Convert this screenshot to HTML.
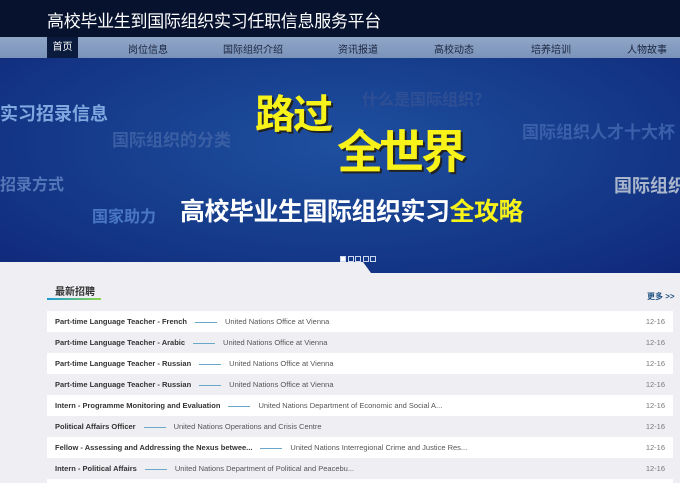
<!DOCTYPE html>
<html><head><meta charset="utf-8"><style>
*{margin:0;padding:0;box-sizing:border-box}
html,body{width:680px;height:483px;overflow:hidden}
body{background:#efeff3;font-family:"Liberation Sans","Noto Sans CJK SC",sans-serif;position:relative}
.top{position:absolute;left:0;top:0;width:680px;height:37px;background:#06122e}
.top h1{position:absolute;left:47px;top:7px;font-size:17px;font-weight:normal;color:#fff;letter-spacing:-0.3px}
.nav{position:absolute;left:0;top:37px;width:680px;height:21px;background:linear-gradient(#8fa6c8,#7b93b9)}
.nav span{position:absolute;top:4px;font-size:10px;color:#1a2540}
.nav .on{left:47px;top:0;width:31px;height:21px;background:#0a1b3d;color:#fff;text-align:center;line-height:21px}
.ban{position:absolute;left:0;top:58px;width:680px;height:215px;background:radial-gradient(ellipse at 50% 40%,#1f4fa0 0%,#173f8e 45%,#10287a 100%);overflow:hidden}
.ban b{position:absolute;white-space:nowrap;font-weight:bold}
.y{color:#f6f21a;text-shadow:2px 2px 0 #222}
.tab{position:absolute;left:0;top:262px;width:362px;height:11px;background:#efeff3}
.tab2{position:absolute;left:355px;top:262px;width:16px;height:11px;background:#efeff3;clip-path:polygon(0 0,50% 0,100% 100%,0 100%)}
.dots{position:absolute;left:340px;top:249px}
.dots i{display:inline-block;width:6px;height:6px;border:1px solid #cdd7ee;margin-right:1.5px}
.dots i:first-child{background:#fff}
.ttl{position:absolute;left:55px;top:283px;font-size:10px;font-weight:bold;color:#333}
.ul{position:absolute;left:47px;top:298px;width:54px;height:2px;background:linear-gradient(90deg,#1a9ad8,#8dd44a)}
.more{position:absolute;left:647px;top:291px;font-size:8px;color:#1d4f80;font-weight:bold}
.row{position:absolute;left:47px;width:626px;height:21px;font-size:7.5px;line-height:21px;color:#555}
.row.w{background:#fff}
.row .t{position:absolute;left:8px;font-weight:bold;color:#333}
.row .d{position:absolute;right:8px;color:#777}
.ln{display:inline-block;width:22px;height:1px;background:#6aa7c9;vertical-align:middle;margin:0 8px 0 8px}
</style></head><body>
<div class="top"><h1>高校毕业生到国际组织实习任职信息服务平台</h1></div>
<div class="nav">
<span class="on">首页</span>
<span style="left:128px">岗位信息</span>
<span style="left:223px">国际组织介绍</span>
<span style="left:338px">资讯报道</span>
<span style="left:434px">高校动态</span>
<span style="left:531px">培养培训</span>
<span style="left:627px">人物故事</span>
</div>
<div class="ban">
<b style="left:0;top:42px;font-size:18px;color:#7fa8e0">实习招录信息</b>
<b style="left:112px;top:68px;font-size:17px;color:#3a5ea3">国际组织的分类</b>
<b style="left:0;top:113px;font-size:16px;color:#5576b8">招录方式</b>
<b style="left:92px;top:145px;font-size:16px;color:#4a77c4">国家助力</b>
<b style="left:362px;top:28px;font-size:16px;color:#2f4f95">什么是国际组织？</b>
<b style="left:522px;top:60px;font-size:17px;color:#3a60aa">国际组织人才十大杯</b>
<b style="left:614px;top:114px;font-size:18px;color:#a9b6cc">国际组织</b>
<b class="y" style="left:255px;top:24px;font-size:40px;letter-spacing:-2px">路过</b>
<b class="y" style="left:337px;top:58px;font-size:46px;letter-spacing:-4px">全世界</b>
<b style="left:180px;top:134px;font-size:25px;color:#fff;letter-spacing:-0.5px">高校毕业生国际组织实习<span style="color:#f6f21a">全攻略</span></b>
</div>
<div class="tab"></div><div class="tab2"></div>
<div class="dots"><i></i><i></i><i></i><i></i><i></i></div>
<div class="ttl">最新招聘</div><div class="ul"></div>
<div class="more">更多 &gt;&gt;</div>
<div class="row w" style="top:311px"><span class="t">Part-time Language Teacher - French<span class="ln"></span><span style="font-weight:normal;color:#555">United Nations Office at Vienna</span></span><span class="d">12-16</span></div>
<div class="row" style="top:332px"><span class="t">Part-time Language Teacher - Arabic<span class="ln"></span><span style="font-weight:normal;color:#555">United Nations Office at Vienna</span></span><span class="d">12-16</span></div>
<div class="row w" style="top:353px"><span class="t">Part-time Language Teacher - Russian<span class="ln"></span><span style="font-weight:normal;color:#555">United Nations Office at Vienna</span></span><span class="d">12-16</span></div>
<div class="row" style="top:374px"><span class="t">Part-time Language Teacher - Russian<span class="ln"></span><span style="font-weight:normal;color:#555">United Nations Office at Vienna</span></span><span class="d">12-16</span></div>
<div class="row w" style="top:395px"><span class="t">Intern - Programme Monitoring and Evaluation<span class="ln"></span><span style="font-weight:normal;color:#555">United Nations Department of Economic and Social A...</span></span><span class="d">12-16</span></div>
<div class="row" style="top:416px"><span class="t">Political Affairs Officer<span class="ln"></span><span style="font-weight:normal;color:#555">United Nations Operations and Crisis Centre</span></span><span class="d">12-16</span></div>
<div class="row w" style="top:437px"><span class="t">Fellow - Assessing and Addressing the Nexus betwee...<span class="ln"></span><span style="font-weight:normal;color:#555">United Nations Interregional Crime and Justice Res...</span></span><span class="d">12-16</span></div>
<div class="row" style="top:458px"><span class="t">Intern - Political Affairs<span class="ln"></span><span style="font-weight:normal;color:#555">United Nations Department of Political and Peacebu...</span></span><span class="d">12-16</span></div>
<div class="row w" style="top:479px"></div>
</body></html>
